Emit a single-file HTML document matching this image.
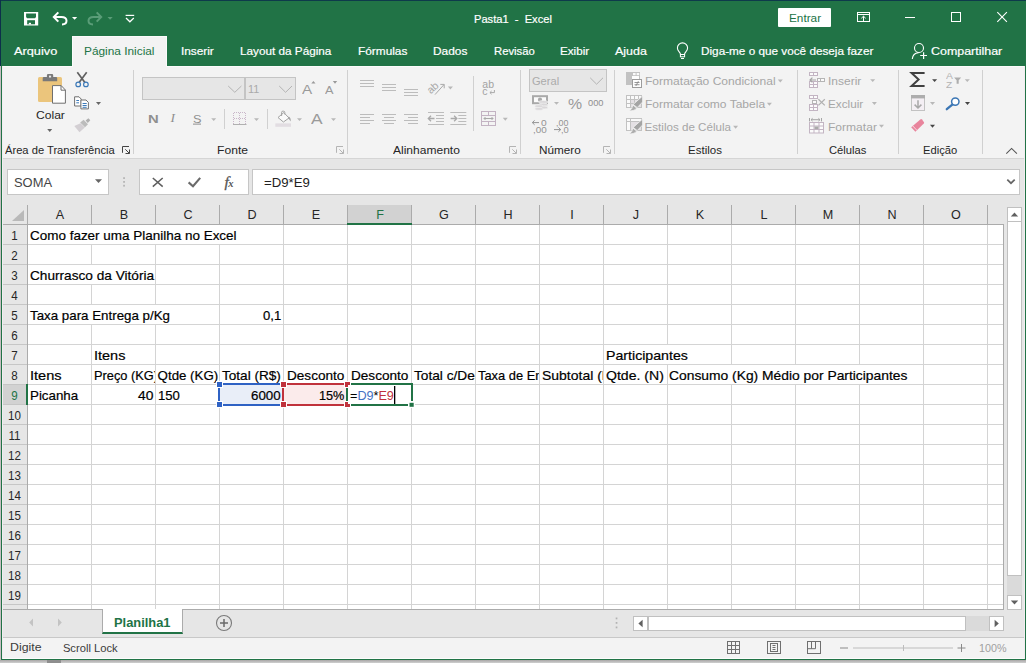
<!DOCTYPE html>
<html lang="pt-BR"><head><meta charset="utf-8"><title>Pasta1 - Excel</title><style>
html,body{margin:0;padding:0;}
body{width:1026px;height:663px;overflow:hidden;background:#217346;font-family:"Liberation Sans",sans-serif;position:relative;}
.b{position:absolute;display:block;box-sizing:border-box;}
.t{position:absolute;white-space:pre;line-height:20px;height:20px;transform-origin:0 0;display:block;}
.c{position:absolute;overflow:hidden;display:block;}
</style></head>
<body>
<div class="b" style="left:0px;top:0px;width:1026px;height:663px;background:#217346;"></div><div class="b" style="left:0px;top:0px;width:1026px;height:1px;background:#0e3a4b;"></div><div class="b" style="left:0px;top:0px;width:1px;height:66px;background:#0c2f4a;"></div><div class="b" style="left:0px;top:66px;width:1px;height:597px;background:#c6bec2;"></div><div class="b" style="left:0px;top:660px;width:1026px;height:3px;background:linear-gradient(#a9a7a7,#cfcfcf);"></div><div class="b" style="left:47px;top:660px;width:14px;height:3px;background:#8e8e8e;"></div><div class="b" style="left:1px;top:1px;width:1025px;height:65px;background:#217346;"></div><div class="b" style="left:72px;top:36px;width:95px;height:31px;background:#f3f3f3;border:1px solid #fbfbfb;border-bottom:none;"></div><div class="b" style="left:2px;top:66px;width:1023px;height:92px;background:#f3f3f3;"></div><div class="b" style="left:2px;top:66px;width:71px;height:1px;background:#fbfbfb;"></div><div class="b" style="left:166px;top:66px;width:859px;height:1px;background:#fbfbfb;"></div><div class="b" style="left:2px;top:158px;width:1023px;height:1px;background:#d5d5d5;"></div><div class="b" style="left:2px;top:159px;width:1023px;height:46px;background:#e6e6e6;"></div><div class="b" style="left:7px;top:169px;width:102px;height:26px;background:#fff;border:1px solid #c6c6c6;"></div><div class="b" style="left:139px;top:169px;width:110px;height:26px;background:#fff;border:1px solid #c6c6c6;"></div><div class="b" style="left:252px;top:169px;width:768px;height:26px;background:#fff;border:1px solid #c6c6c6;"></div><div class="b" style="left:2px;top:205px;width:1023px;height:405px;background:#e6e6e6;"></div><div class="b" style="left:28px;top:225px;width:975px;height:384px;background:#fff;"></div><div class="b" style="left:348px;top:205px;width:63px;height:19px;background:#d2d2d2;"></div><div class="b" style="left:2px;top:385px;width:25px;height:19px;background:#d2d2d2;"></div><svg class="b" style="left:0px;top:0px;" width="1026" height="663" viewBox="0 0 1026 663"><rect x="91" y="225" width="1" height="384" fill="#d4d4d4"/><rect x="91" y="205" width="1" height="19" fill="#ababab"/><rect x="155" y="225" width="1" height="384" fill="#d4d4d4"/><rect x="155" y="205" width="1" height="19" fill="#ababab"/><rect x="219" y="225" width="1" height="384" fill="#d4d4d4"/><rect x="219" y="205" width="1" height="19" fill="#ababab"/><rect x="283" y="225" width="1" height="384" fill="#d4d4d4"/><rect x="283" y="205" width="1" height="19" fill="#ababab"/><rect x="347" y="225" width="1" height="384" fill="#d4d4d4"/><rect x="347" y="205" width="1" height="19" fill="#ababab"/><rect x="411" y="225" width="1" height="384" fill="#d4d4d4"/><rect x="411" y="205" width="1" height="19" fill="#ababab"/><rect x="475" y="225" width="1" height="384" fill="#d4d4d4"/><rect x="475" y="205" width="1" height="19" fill="#ababab"/><rect x="539" y="225" width="1" height="384" fill="#d4d4d4"/><rect x="539" y="205" width="1" height="19" fill="#ababab"/><rect x="603" y="225" width="1" height="384" fill="#d4d4d4"/><rect x="603" y="205" width="1" height="19" fill="#ababab"/><rect x="667" y="225" width="1" height="384" fill="#d4d4d4"/><rect x="667" y="205" width="1" height="19" fill="#ababab"/><rect x="731" y="225" width="1" height="384" fill="#d4d4d4"/><rect x="731" y="205" width="1" height="19" fill="#ababab"/><rect x="795" y="225" width="1" height="384" fill="#d4d4d4"/><rect x="795" y="205" width="1" height="19" fill="#ababab"/><rect x="859" y="225" width="1" height="384" fill="#d4d4d4"/><rect x="859" y="205" width="1" height="19" fill="#ababab"/><rect x="923" y="225" width="1" height="384" fill="#d4d4d4"/><rect x="923" y="205" width="1" height="19" fill="#ababab"/><rect x="987" y="225" width="1" height="384" fill="#d4d4d4"/><rect x="987" y="205" width="1" height="19" fill="#ababab"/><rect x="28" y="244" width="975" height="1" fill="#d4d4d4"/><rect x="2" y="244" width="25" height="1" fill="#c6c6c6"/><rect x="28" y="264" width="975" height="1" fill="#d4d4d4"/><rect x="2" y="264" width="25" height="1" fill="#c6c6c6"/><rect x="28" y="284" width="975" height="1" fill="#d4d4d4"/><rect x="2" y="284" width="25" height="1" fill="#c6c6c6"/><rect x="28" y="304" width="975" height="1" fill="#d4d4d4"/><rect x="2" y="304" width="25" height="1" fill="#c6c6c6"/><rect x="28" y="324" width="975" height="1" fill="#d4d4d4"/><rect x="2" y="324" width="25" height="1" fill="#c6c6c6"/><rect x="28" y="344" width="975" height="1" fill="#d4d4d4"/><rect x="2" y="344" width="25" height="1" fill="#c6c6c6"/><rect x="28" y="364" width="975" height="1" fill="#d4d4d4"/><rect x="2" y="364" width="25" height="1" fill="#c6c6c6"/><rect x="28" y="384" width="975" height="1" fill="#d4d4d4"/><rect x="2" y="384" width="25" height="1" fill="#c6c6c6"/><rect x="28" y="404" width="975" height="1" fill="#d4d4d4"/><rect x="2" y="404" width="25" height="1" fill="#c6c6c6"/><rect x="28" y="424" width="975" height="1" fill="#d4d4d4"/><rect x="2" y="424" width="25" height="1" fill="#c6c6c6"/><rect x="28" y="444" width="975" height="1" fill="#d4d4d4"/><rect x="2" y="444" width="25" height="1" fill="#c6c6c6"/><rect x="28" y="464" width="975" height="1" fill="#d4d4d4"/><rect x="2" y="464" width="25" height="1" fill="#c6c6c6"/><rect x="28" y="484" width="975" height="1" fill="#d4d4d4"/><rect x="2" y="484" width="25" height="1" fill="#c6c6c6"/><rect x="28" y="504" width="975" height="1" fill="#d4d4d4"/><rect x="2" y="504" width="25" height="1" fill="#c6c6c6"/><rect x="28" y="524" width="975" height="1" fill="#d4d4d4"/><rect x="2" y="524" width="25" height="1" fill="#c6c6c6"/><rect x="28" y="544" width="975" height="1" fill="#d4d4d4"/><rect x="2" y="544" width="25" height="1" fill="#c6c6c6"/><rect x="28" y="564" width="975" height="1" fill="#d4d4d4"/><rect x="2" y="564" width="25" height="1" fill="#c6c6c6"/><rect x="28" y="584" width="975" height="1" fill="#d4d4d4"/><rect x="2" y="584" width="25" height="1" fill="#c6c6c6"/><rect x="28" y="604" width="975" height="1" fill="#d4d4d4"/><rect x="2" y="604" width="25" height="1" fill="#c6c6c6"/><rect x="27" y="205" width="1" height="404" fill="#ababab"/><rect x="2" y="224" width="1001" height="1" fill="#ababab"/><rect x="1003" y="224" width="1" height="386" fill="#ababab"/><rect x="2" y="609" width="1002" height="1" fill="#ababab"/><rect x="347" y="223" width="65" height="2" fill="#217346"/><rect x="26" y="384" width="2" height="21" fill="#217346"/><path d="M24 210 L24 221 L12 221 Z" fill="#b9b9b9"/></svg><div class="b" style="left:91px;top:225px;width:1px;height:19px;background:#fff;"></div><div class="b" style="left:155px;top:225px;width:1px;height:19px;background:#fff;"></div><div class="b" style="left:219px;top:225px;width:1px;height:19px;background:#fff;"></div><div class="b" style="left:91px;top:265px;width:1px;height:19px;background:#fff;"></div><div class="b" style="left:91px;top:305px;width:1px;height:19px;background:#fff;"></div><div class="b" style="left:155px;top:305px;width:1px;height:19px;background:#fff;"></div><div class="b" style="left:667px;top:345px;width:1px;height:19px;background:#fff;"></div><div class="b" style="left:731px;top:365px;width:1px;height:19px;background:#fff;"></div><div class="b" style="left:795px;top:365px;width:1px;height:19px;background:#fff;"></div><div class="b" style="left:859px;top:365px;width:1px;height:19px;background:#fff;"></div><div class="b" style="left:220px;top:385px;width:62px;height:19px;background:#e9eef8;"></div><div class="b" style="left:284px;top:385px;width:62px;height:19px;background:#fbebeb;"></div><div class="b" style="left:2px;top:610px;width:1023px;height:28px;background:#e6e6e6;"></div><div class="b" style="left:102px;top:609px;width:81px;height:25px;background:#fff;border-left:1px solid #ababab;border-right:1px solid #ababab;border-bottom:2px solid #217346;"></div><div class="b" style="left:2px;top:637px;width:1023px;height:1px;background:#c8c8c8;"></div><div class="b" style="left:2px;top:638px;width:1023px;height:21px;background:#f3f3f3;"></div><div class="b" style="left:2px;top:658px;width:1023px;height:1px;background:#fdfdfd;"></div><div class="b" style="left:1024px;top:66px;width:1px;height:593px;background:#f2edf0;"></div><div class="b" style="left:2px;top:66px;width:1px;height:593px;background:#f2edf0;"></div><span class="t" style="left:473.50px;top:8.98px;font-size:11.6px;color:#fff;-webkit-text-stroke:0.2px;transform:scaleX(0.9593);">Pasta1  -  Excel</span><div class="b" style="left:778px;top:8px;width:53px;height:19px;background:#fff;border-radius:1px;"></div><span class="t" style="left:788.60px;top:7.98px;font-size:11.6px;color:#217346;transform:scaleX(1.0165);">Entrar</span><span class="t" style="left:14.30px;top:40.98px;font-size:11.6px;color:#fff;-webkit-text-stroke:0.2px;transform:scaleX(1.1014);">Arquivo</span><span class="t" style="left:83.60px;top:40.98px;font-size:11.6px;color:#217346;transform:scaleX(1.0222);">Página Inicial</span><span class="t" style="left:180.70px;top:40.98px;font-size:11.6px;color:#fff;-webkit-text-stroke:0.2px;transform:scaleX(1.0180);">Inserir</span><span class="t" style="left:239.80px;top:40.98px;font-size:11.6px;color:#fff;-webkit-text-stroke:0.2px;transform:scaleX(1.0127);">Layout da Página</span><span class="t" style="left:357.80px;top:40.98px;font-size:11.6px;color:#fff;-webkit-text-stroke:0.2px;transform:scaleX(1.0222);">Fórmulas</span><span class="t" style="left:433.30px;top:40.98px;font-size:11.6px;color:#fff;-webkit-text-stroke:0.2px;transform:scaleX(1.0264);">Dados</span><span class="t" style="left:493.80px;top:40.98px;font-size:11.6px;color:#fff;-webkit-text-stroke:0.2px;transform:scaleX(0.9716);">Revisão</span><span class="t" style="left:560.40px;top:40.98px;font-size:11.6px;color:#fff;-webkit-text-stroke:0.2px;transform:scaleX(1.0034);">Exibir</span><span class="t" style="left:615.40px;top:40.98px;font-size:11.6px;color:#fff;-webkit-text-stroke:0.2px;transform:scaleX(1.0723);">Ajuda</span><span class="t" style="left:701.30px;top:40.98px;font-size:11.6px;color:#fff;-webkit-text-stroke:0.2px;transform:scaleX(1.0133);">Diga-me o que você deseja fazer</span><span class="t" style="left:930.50px;top:40.98px;font-size:11.6px;color:#fff;-webkit-text-stroke:0.2px;transform:scaleX(1.0727);">Compartilhar</span><span class="t" style="left:35.80px;top:104.98px;font-size:11.6px;color:#262626;transform:scaleX(1.0426);">Colar</span><span class="t" style="left:4.60px;top:139.98px;font-size:11.6px;color:#262626;transform:scaleX(0.9625);">Área de Transferência</span><span class="t" style="left:216.60px;top:139.98px;font-size:11.6px;color:#262626;transform:scaleX(1.0453);">Fonte</span><span class="t" style="left:392.50px;top:139.98px;font-size:11.6px;color:#262626;transform:scaleX(1.0380);">Alinhamento</span><span class="t" style="left:538.50px;top:139.98px;font-size:11.6px;color:#262626;transform:scaleX(1.0133);">Número</span><span class="t" style="left:688.40px;top:139.98px;font-size:11.6px;color:#262626;transform:scaleX(0.9925);">Estilos</span><span class="t" style="left:829.20px;top:139.98px;font-size:11.6px;color:#262626;transform:scaleX(0.9645);">Células</span><span class="t" style="left:922.80px;top:139.98px;font-size:11.6px;color:#262626;transform:scaleX(0.9647);">Edição</span><span class="t" style="left:644.60px;top:71.18px;font-size:11.6px;color:#a6a6a6;transform:scaleX(1.0392);">Formatação Condicional</span><span class="t" style="left:644.60px;top:94.38px;font-size:11.6px;color:#a6a6a6;transform:scaleX(1.0373);">Formatar como Tabela</span><span class="t" style="left:644.60px;top:117.28px;font-size:11.6px;color:#a6a6a6;">Estilos de Célula</span><span class="t" style="left:827.50px;top:71.18px;font-size:11.6px;color:#a6a6a6;transform:scaleX(1.0336);">Inserir</span><span class="t" style="left:827.50px;top:94.38px;font-size:11.6px;color:#a6a6a6;transform:scaleX(1.0145);">Excluir</span><span class="t" style="left:827.50px;top:117.28px;font-size:11.6px;color:#a6a6a6;transform:scaleX(1.0397);">Formatar</span><span class="t" style="left:13.50px;top:172.67px;font-size:12.5px;color:#444;transform:scaleX(1.0323);">SOMA</span><span class="t" style="left:263.70px;top:172.67px;font-size:12.5px;color:#222;transform:scaleX(1.0544);">=D9*E9</span><span class="t" style="left:40px;top:205.33px;width:40px;text-align:center;font-size:12.6px;color:#262626;">A</span><span class="t" style="left:104px;top:205.33px;width:40px;text-align:center;font-size:12.6px;color:#262626;">B</span><span class="t" style="left:168px;top:205.33px;width:40px;text-align:center;font-size:12.6px;color:#262626;">C</span><span class="t" style="left:232px;top:205.33px;width:40px;text-align:center;font-size:12.6px;color:#262626;">D</span><span class="t" style="left:296px;top:205.33px;width:40px;text-align:center;font-size:12.6px;color:#262626;">E</span><span class="t" style="left:360px;top:205.33px;width:40px;text-align:center;font-size:12.6px;color:#217346;">F</span><span class="t" style="left:424px;top:205.33px;width:40px;text-align:center;font-size:12.6px;color:#262626;">G</span><span class="t" style="left:488px;top:205.33px;width:40px;text-align:center;font-size:12.6px;color:#262626;">H</span><span class="t" style="left:552px;top:205.33px;width:40px;text-align:center;font-size:12.6px;color:#262626;">I</span><span class="t" style="left:616px;top:205.33px;width:40px;text-align:center;font-size:12.6px;color:#262626;">J</span><span class="t" style="left:680px;top:205.33px;width:40px;text-align:center;font-size:12.6px;color:#262626;">K</span><span class="t" style="left:744px;top:205.33px;width:40px;text-align:center;font-size:12.6px;color:#262626;">L</span><span class="t" style="left:808px;top:205.33px;width:40px;text-align:center;font-size:12.6px;color:#262626;">M</span><span class="t" style="left:872px;top:205.33px;width:40px;text-align:center;font-size:12.6px;color:#262626;">N</span><span class="t" style="left:936px;top:205.33px;width:40px;text-align:center;font-size:12.6px;color:#262626;">O</span><span class="t" style="left:0px;top:226.13px;width:29px;text-align:center;font-size:12.6px;color:#262626;transform:scaleX(0.92);transform-origin:14.5px 0;">1</span><span class="t" style="left:0px;top:246.13px;width:29px;text-align:center;font-size:12.6px;color:#262626;transform:scaleX(0.92);transform-origin:14.5px 0;">2</span><span class="t" style="left:0px;top:266.13px;width:29px;text-align:center;font-size:12.6px;color:#262626;transform:scaleX(0.92);transform-origin:14.5px 0;">3</span><span class="t" style="left:0px;top:286.13px;width:29px;text-align:center;font-size:12.6px;color:#262626;transform:scaleX(0.92);transform-origin:14.5px 0;">4</span><span class="t" style="left:0px;top:306.13px;width:29px;text-align:center;font-size:12.6px;color:#262626;transform:scaleX(0.92);transform-origin:14.5px 0;">5</span><span class="t" style="left:0px;top:326.13px;width:29px;text-align:center;font-size:12.6px;color:#262626;transform:scaleX(0.92);transform-origin:14.5px 0;">6</span><span class="t" style="left:0px;top:346.13px;width:29px;text-align:center;font-size:12.6px;color:#262626;transform:scaleX(0.92);transform-origin:14.5px 0;">7</span><span class="t" style="left:0px;top:366.13px;width:29px;text-align:center;font-size:12.6px;color:#262626;transform:scaleX(0.92);transform-origin:14.5px 0;">8</span><span class="t" style="left:0px;top:386.13px;width:29px;text-align:center;font-size:12.6px;color:#217346;transform:scaleX(0.92);transform-origin:14.5px 0;">9</span><span class="t" style="left:0px;top:406.13px;width:29px;text-align:center;font-size:12.6px;color:#262626;transform:scaleX(0.92);transform-origin:14.5px 0;">10</span><span class="t" style="left:0px;top:426.13px;width:29px;text-align:center;font-size:12.6px;color:#262626;transform:scaleX(0.92);transform-origin:14.5px 0;">11</span><span class="t" style="left:0px;top:446.13px;width:29px;text-align:center;font-size:12.6px;color:#262626;transform:scaleX(0.92);transform-origin:14.5px 0;">12</span><span class="t" style="left:0px;top:466.13px;width:29px;text-align:center;font-size:12.6px;color:#262626;transform:scaleX(0.92);transform-origin:14.5px 0;">13</span><span class="t" style="left:0px;top:486.13px;width:29px;text-align:center;font-size:12.6px;color:#262626;transform:scaleX(0.92);transform-origin:14.5px 0;">14</span><span class="t" style="left:0px;top:506.13px;width:29px;text-align:center;font-size:12.6px;color:#262626;transform:scaleX(0.92);transform-origin:14.5px 0;">15</span><span class="t" style="left:0px;top:526.13px;width:29px;text-align:center;font-size:12.6px;color:#262626;transform:scaleX(0.92);transform-origin:14.5px 0;">16</span><span class="t" style="left:0px;top:546.13px;width:29px;text-align:center;font-size:12.6px;color:#262626;transform:scaleX(0.92);transform-origin:14.5px 0;">17</span><span class="t" style="left:0px;top:566.13px;width:29px;text-align:center;font-size:12.6px;color:#262626;transform:scaleX(0.92);transform-origin:14.5px 0;">18</span><span class="t" style="left:0px;top:586.13px;width:29px;text-align:center;font-size:12.6px;color:#262626;transform:scaleX(0.92);transform-origin:14.5px 0;">19</span><span class="t" style="left:30.10px;top:225.89px;font-size:13.3px;color:#000;-webkit-text-stroke:0.2px;transform:scaleX(1.0127);">Como fazer uma Planilha no Excel</span><span class="t" style="left:30.10px;top:265.89px;font-size:13.3px;color:#000;-webkit-text-stroke:0.2px;transform:scaleX(1.0259);">Churrasco da Vitória</span><span class="t" style="left:30.10px;top:305.89px;font-size:13.3px;color:#000;-webkit-text-stroke:0.2px;transform:scaleX(1.0020);">Taxa para Entrega p/Kg</span><span class="t" style="left:262.50px;top:305.89px;font-size:13.3px;color:#000;-webkit-text-stroke:0.2px;transform:scaleX(0.9838);">0,1</span><span class="t" style="left:94.00px;top:345.89px;font-size:13.3px;color:#000;-webkit-text-stroke:0.2px;transform:scaleX(1.0892);">Itens</span><span class="t" style="left:605.80px;top:345.89px;font-size:13.3px;color:#000;-webkit-text-stroke:0.2px;transform:scaleX(1.0654);">Participantes</span><span class="t" style="left:30.00px;top:365.89px;font-size:13.3px;color:#000;-webkit-text-stroke:0.2px;transform:scaleX(1.0962);">Itens</span><span class="c" style="left:92px;top:365.89px;width:63px;height:20px;"><span class="t" style="left:2.10px;top:0;font-size:13.3px;color:#000;-webkit-text-stroke:0.2px;transform:scaleX(0.9633);">Preço (KG)</span></span><span class="t" style="left:157.60px;top:365.89px;font-size:13.3px;color:#000;-webkit-text-stroke:0.2px;">Qtde (KG)</span><span class="t" style="left:221.80px;top:365.89px;font-size:13.3px;color:#000;-webkit-text-stroke:0.2px;transform:scaleX(1.0218);">Total (R$)</span><span class="t" style="left:286.50px;top:365.89px;font-size:13.3px;color:#000;-webkit-text-stroke:0.2px;transform:scaleX(1.0216);">Desconto</span><span class="t" style="left:350.50px;top:365.89px;font-size:13.3px;color:#000;-webkit-text-stroke:0.2px;transform:scaleX(1.0216);">Desconto</span><span class="c" style="left:412px;top:365.89px;width:63px;height:20px;"><span class="t" style="left:1.70px;top:0;font-size:13.3px;color:#000;-webkit-text-stroke:0.2px;transform:scaleX(1.0283);">Total c/Desconto</span></span><span class="c" style="left:476px;top:365.89px;width:63px;height:20px;"><span class="t" style="left:2.20px;top:0;font-size:13.3px;color:#000;-webkit-text-stroke:0.2px;transform:scaleX(0.9689);">Taxa de Entrega</span></span><span class="c" style="left:540px;top:365.89px;width:63px;height:20px;"><span class="t" style="left:1.60px;top:0;font-size:13.3px;color:#000;-webkit-text-stroke:0.2px;transform:scaleX(1.0506);">Subtotal (R$)</span></span><span class="t" style="left:605.80px;top:365.89px;font-size:13.3px;color:#000;-webkit-text-stroke:0.2px;transform:scaleX(1.0587);">Qtde. (N)</span><span class="t" style="left:669.30px;top:365.89px;font-size:13.3px;color:#000;-webkit-text-stroke:0.2px;transform:scaleX(1.0406);">Consumo (Kg) Médio por Participantes</span><span class="t" style="left:30.00px;top:385.89px;font-size:13.3px;color:#000;-webkit-text-stroke:0.2px;transform:scaleX(1.0029);">Picanha</span><span class="t" style="left:137.80px;top:385.89px;font-size:13.3px;color:#000;-webkit-text-stroke:0.2px;transform:scaleX(1.0408);">40</span><span class="t" style="left:157.80px;top:385.89px;font-size:13.3px;color:#000;-webkit-text-stroke:0.2px;transform:scaleX(0.9870);">150</span><span class="t" style="left:251.30px;top:385.89px;font-size:13.3px;color:#000;-webkit-text-stroke:0.2px;transform:scaleX(1.0036);">6000</span><span class="t" style="left:319.30px;top:385.89px;font-size:13.3px;color:#000;-webkit-text-stroke:0.2px;transform:scaleX(0.9540);">15%</span><span class="t" style="left:114.00px;top:612.83px;font-size:12.6px;color:#217346;font-weight:700;transform:scaleX(1.0218);">Planilha1</span><span class="t" style="left:9.70px;top:637.32px;font-size:11.2px;color:#3b3b3b;transform:scaleX(1.1010);">Digite</span><span class="t" style="left:62.90px;top:638.02px;font-size:11.2px;color:#3b3b3b;">Scroll Lock</span><span class="t" style="left:978.90px;top:637.72px;font-size:11.2px;color:#a0a0a0;transform:scaleX(0.9607);">100%</span><svg class="b" style="left:0px;top:0px;" width="1026" height="663" viewBox="0 0 1026 663"><rect x="218" y="383" width="66" height="2" fill="#2f62c4"/><rect x="218" y="404" width="66" height="2" fill="#2f62c4"/><rect x="218" y="383" width="2" height="23" fill="#2f62c4"/><rect x="282" y="383" width="66" height="2" fill="#c0323c"/><rect x="282" y="404" width="66" height="2" fill="#c0323c"/><rect x="282" y="383" width="2" height="23" fill="#c0323c"/><rect x="346" y="383" width="2" height="23" fill="#c0323c"/><rect x="346" y="383" width="67" height="2" fill="#217346"/><rect x="346" y="404" width="67" height="2" fill="#217346"/><rect x="346" y="383" width="2" height="23" fill="#217346"/><rect x="411" y="383" width="2" height="23" fill="#217346"/><rect x="216" y="381" width="7" height="7" fill="#fff"/><rect x="217" y="382" width="5" height="5" fill="#2f62c4"/><rect x="216" y="401" width="7" height="7" fill="#fff"/><rect x="217" y="402" width="5" height="5" fill="#2f62c4"/><rect x="280" y="381" width="7" height="7" fill="#fff"/><rect x="281" y="382" width="5" height="5" fill="#c0323c"/><rect x="280" y="401" width="7" height="7" fill="#fff"/><rect x="281" y="402" width="5" height="5" fill="#c0323c"/><rect x="344" y="381" width="7" height="7" fill="#fff"/><rect x="345" y="382" width="5" height="5" fill="#c0323c"/><rect x="344" y="401" width="7" height="7" fill="#fff"/><rect x="345" y="402" width="5" height="5" fill="#c0323c"/><rect x="348" y="385" width="63" height="19" fill="#fff"/><rect x="408" y="401" width="7" height="7" fill="#fff"/><rect x="409.5" y="402.8" width="4.2" height="4" fill="#217346"/><rect x="394" y="386" width="1.3" height="18" fill="#000"/></svg><span class="t" style="left:349.80px;top:385.89px;font-size:13.3px;color:#000;transform:scaleX(0.9498);">=<span style="color:#4472c4">D9</span>*<span style="color:#c0323c">E9</span></span><svg class="b" style="left:0px;top:0px;" width="1026" height="66" viewBox="0 0 1026 66"><rect x="24" y="12" width="14.2" height="13.5" fill="#fff"/><path d="M26.1 13.5 H36 V17 L35 18.2 H27.1 L26.1 17 Z" fill="#217346"/><rect x="27.2" y="20.2" width="7.8" height="4.1" fill="#217346"/><rect x="28.8" y="22.8" width="2.2" height="1.6" fill="#fff"/><path d="M58.3 12.4 L53.8 17 L58.3 21.6" stroke="#fff" fill="none" stroke-width="2"/><path d="M54.2 17 H61.3 C64.6 17 66.5 18.7 66.5 20.8 C66.5 22.9 64.8 24.4 62 24.4" stroke="#fff" fill="none" stroke-width="2"/><path d="M72 17 H77.2 L74.6 19.8 Z" fill="#fff"/><path d="M96.7 12.4 L101.2 17 L96.7 21.6" stroke="#5a9d78" fill="none" stroke-width="2"/><path d="M100.8 17 H93.7 C90.4 17 88.5 18.7 88.5 20.8 C88.5 22.9 90.2 24.4 93 24.4" stroke="#5a9d78" fill="none" stroke-width="2"/><path d="M107.5 17 H112.7 L110.1 19.8 Z" fill="#5a9d78"/><rect x="125.6" y="14.8" width="8.6" height="1.2" fill="#fff"/><path d="M126 18 L129.9 21.8 L133.8 18" stroke="#fff" fill="none" stroke-width="1.2"/><rect x="857.5" y="12.5" width="12" height="9" stroke="#fff" fill="none" stroke-width="1"/><rect x="857" y="14" width="13" height="1" fill="#fff"/><path d="M863.5 21 V16.3 M861.3 18.3 L863.5 16.2 L865.7 18.3" stroke="#fff" fill="none" stroke-width="1"/><rect x="905" y="17" width="10" height="1" fill="#fff"/><rect x="951.5" y="12.5" width="9" height="9" stroke="#fff" fill="none" stroke-width="1"/><path d="M997.3 12.2 L1006.9 21.8 M1006.9 12.2 L997.3 21.8" stroke="#fff" fill="none" stroke-width="1.1"/><path d="M680.5 54.5 C680.5 52.3 677.4 51.3 677.4 48 A5.1 5.1 0 0 1 687.6 48 C687.6 51.3 684.5 52.3 684.5 54.5" stroke="#fff" fill="none" stroke-width="1.1"/><rect x="680.4" y="54.5" width="4.2" height="2.3" stroke="#fff" fill="none" stroke-width="1"/><rect x="681" y="58" width="3" height="1" fill="#fff"/><circle cx="919" cy="48" r="4.5" stroke="#fff" fill="none" stroke-width="1.1"/><path d="M912.3 59 C912.6 55.6 915 53 918.6 52.6" stroke="#fff" fill="none" stroke-width="1.1"/><path d="M920.2 55.5 H927 M923.6 52.2 V58.9" stroke="#fff" fill="none" stroke-width="1.2"/></svg><svg class="b" style="left:0px;top:158px;" width="1026" height="47" viewBox="0 158 1026 47"><path d="M95 179.3 H102 L98.5 183 Z" fill="#666"/><rect x="123.2" y="177.2" width="1.7" height="1.8" fill="#b3b3b3"/><rect x="123.2" y="181" width="1.7" height="1.8" fill="#b3b3b3"/><rect x="123.2" y="184.8" width="1.7" height="1.8" fill="#b3b3b3"/><path d="M152.8 178 L162.7 186.6 M162.7 178 L152.8 186.6" stroke="#5e5e5e" stroke-width="1.5" fill="none"/><path d="M188.6 182.4 L193 186.3 L200.2 177.9" stroke="#6a6a6a" stroke-width="2.1" fill="none"/><path d="M1007.3 179.6 L1011 183.2 L1014.7 179.6" stroke="#666" stroke-width="1.7" fill="none"/></svg><span class="t" style="left:224.5px;top:171.5px;font-family:'Liberation Serif',serif;font-style:italic;font-size:15.5px;color:#555;-webkit-text-stroke:0.3px #555;">f<span style="font-size:10.5px;margin-left:-0.5px;font-weight:bold;-webkit-text-stroke:0;">x</span></span><div class="b" style="left:142px;top:77px;width:103px;height:23px;background:#e6e6e6;border:1px solid #c4c4c4;"></div><div class="b" style="left:245px;top:77px;width:51px;height:23px;background:#e6e6e6;border:1px solid #c4c4c4;"></div><span class="t" style="left:248.00px;top:78.98px;font-size:11.6px;color:#aaaaaa;transform:scaleX(0.9380);">11</span><span class="t" style="left:302.10px;top:79.67px;font-size:12.5px;color:#9a9a9a;transform:scaleX(1.2225);">A</span><span class="t" style="left:324.60px;top:80.36px;font-size:10.5px;color:#9a9a9a;transform:scaleX(1.2116);">A</span><span class="t" style="left:147.90px;top:109.28px;font-size:11.6px;color:#8f8f8f;font-weight:700;transform:scaleX(1.2776);">N</span><span class="t" style="left:170.6px;top:108.3px;font-family:'Liberation Serif',serif;font-style:italic;font-size:13.5px;color:#8f8f8f;">I</span><span class="t" style="left:192.60px;top:109.18px;font-size:11.6px;color:#8f8f8f;transform:scaleX(1.0990);">S</span><span class="t" style="left:311.30px;top:108.85px;font-size:14px;color:#9a9a9a;transform:scaleX(1.2415);">A</span><span class="t" style="left:425.6px;top:75.7px;font-size:10.5px;color:#a9a9a9;transform:rotate(-42deg);transform-origin:8px 10px;">ab</span><span class="t" style="left:482.3px;top:74.1px;font-size:10.5px;color:#a2a2a2;line-height:20px;">ab</span><span class="t" style="left:482.3px;top:81.2px;font-size:10.5px;color:#a2a2a2;line-height:20px;">c</span><div class="b" style="left:529px;top:69px;width:78px;height:23px;background:#e6e6e6;border:1px solid #c4c4c4;"></div><span class="t" style="left:532.10px;top:70.58px;font-size:11.6px;color:#ababab;transform:scaleX(0.9556);">Geral</span><span class="t" style="left:567.80px;top:93.98px;font-size:14.5px;color:#9a9a9a;transform:scaleX(1.0925);">%</span><span class="t" style="left:588.30px;top:92.58px;font-size:9px;color:#8f8f8f;transform:scaleX(1.0312);">000</span><span class="t" style="left:541.00px;top:112.65px;font-size:8.5px;color:#949494;transform:scaleX(1.2040);">0</span><span class="t" style="left:532.90px;top:119.95px;font-size:8.5px;color:#949494;transform:scaleX(1.1667);">,00</span><span class="t" style="left:556.30px;top:112.65px;font-size:8.5px;color:#949494;transform:scaleX(1.0483);">,00</span><span class="t" style="left:560.90px;top:119.95px;font-size:8.5px;color:#949494;transform:scaleX(1.0996);">,0</span><span class="t" style="left:945.50px;top:65.58px;font-size:9px;color:#b2b2b2;transform:scaleX(1.1470);">A</span><span class="t" style="left:945.90px;top:74.68px;font-size:9px;color:#b2b2b2;transform:scaleX(1.1273);">Z</span><svg class="b" style="left:0px;top:200px;" width="1026" height="463" viewBox="0 200 1026 463"><path d="M33 618.6 V626.4 L29.2 622.5 Z" fill="#c3c3c3"/><path d="M58 618.6 V626.4 L61.8 622.5 Z" fill="#c3c3c3"/><circle cx="224" cy="623" r="7.5" fill="none" stroke="#7a7a7a" stroke-width="1.1"/><path d="M220 623 H228 M224 619 V627" stroke="#6a6a6a" stroke-width="1.5" fill="none"/><rect x="615.7" y="617.5" width="1.7" height="1.8" fill="#b3b3b3"/><rect x="615.7" y="622" width="1.7" height="1.8" fill="#b3b3b3"/><rect x="615.7" y="626.5" width="1.7" height="1.8" fill="#b3b3b3"/><rect x="633.5" y="616.5" width="14" height="14" fill="#fff" stroke="#c0c0c0" stroke-width="1"/><path d="M642.6 619.8 V627.2 L638.4 623.5 Z" fill="#606060"/><rect x="648" y="616" width="341" height="15" fill="#dadada"/><rect x="648.5" y="616.5" width="317" height="14" fill="#fff" stroke="#c0c0c0" stroke-width="1"/><rect x="989.5" y="616.5" width="14" height="14" fill="#fff" stroke="#c0c0c0" stroke-width="1"/><path d="M994.6 619.8 V627.2 L998.8 623.5 Z" fill="#606060"/><rect x="1007" y="221" width="15" height="374" fill="#dadada"/><rect x="1007.5" y="207.5" width="14" height="14" fill="#fff" stroke="#c0c0c0" stroke-width="1"/><path d="M1010.8 216.6 H1018.2 L1014.5 212.6 Z" fill="#606060"/><rect x="1007.5" y="221.5" width="14" height="354" fill="#fff" stroke="#c0c0c0" stroke-width="1"/><rect x="1007.5" y="595.5" width="14" height="14" fill="#fff" stroke="#c0c0c0" stroke-width="1"/><path d="M1010.8 600.6 H1018.2 L1014.5 604.6 Z" fill="#606060"/><rect x="727.5" y="641.5" width="12" height="12" fill="none" stroke="#6f6f6f" stroke-width="1"/><path d="M731.5 641.5 V653.5 M735.5 641.5 V653.5 M727.5 645.5 H739.5 M727.5 649.5 H739.5" stroke="#6f6f6f" stroke-width="1" fill="none"/><rect x="767.5" y="641.5" width="13" height="12" fill="none" stroke="#6f6f6f" stroke-width="1"/><rect x="770.5" y="643.5" width="7" height="8" fill="none" stroke="#6f6f6f" stroke-width="1"/><path d="M772.5 645.5 H775.5 M772.5 647.5 H775.5 M772.5 649.5 H775.5" stroke="#6f6f6f" stroke-width="1" fill="none"/><rect x="807.5" y="641.5" width="13" height="12" fill="none" stroke="#6f6f6f" stroke-width="1"/><path d="M811.5 641.5 V648.7 M815.5 641.5 V648.7 M807.5 648.7 H815.5" stroke="#6f6f6f" stroke-width="1" fill="none"/><rect x="840" y="647.5" width="8" height="1" fill="#8a8a8a"/><rect x="853" y="647.5" width="100" height="1" fill="#bdbdbd"/><rect x="903" y="645" width="1" height="6" fill="#bdbdbd"/><path d="M957.5 648 H965.5 M961.5 644 V652" stroke="#8a8a8a" stroke-width="1" fill="none"/></svg><svg class="b" style="left:0px;top:66px;" width="1026" height="92" viewBox="0 66 1026 92"><rect x="133" y="70" width="1" height="84" fill="#d0d0d0"/><rect x="347" y="70" width="1" height="84" fill="#d0d0d0"/><rect x="520" y="70" width="1" height="84" fill="#d0d0d0"/><rect x="614" y="70" width="1" height="84" fill="#d0d0d0"/><rect x="797" y="70" width="1" height="84" fill="#d0d0d0"/><rect x="898" y="70" width="1" height="84" fill="#d0d0d0"/><rect x="982" y="70" width="1" height="84" fill="#d0d0d0"/><rect x="38" y="77" width="24" height="25" rx="1.6" fill="#ebc57c"/><path d="M42.7 81.2 V78.2 Q42.7 77 44 77 H46.9 V75.3 Q46.9 74.1 48.2 74.1 H52 Q53.2 74.1 53.2 75.3 V77 H56 Q57.2 77 57.2 78.2 V81.2 Z" fill="#797979"/><rect x="49" y="75.6" width="2.1" height="1.9" fill="#e9e9e9"/><path d="M52.5 85.6 H61.2 L65.4 90 V103.2 H52.5 Z" fill="#fff" stroke="#6f6f6f" stroke-width="1"/><path d="M61 85.8 V90.2 H65.3" fill="none" stroke="#6f6f6f" stroke-width="1"/><path d="M47.2 129.05 H52.2 L49.7 131.95 Z" fill="#666"/><path d="M77.3 72.3 L84.9 82.6 M86.7 72.3 L79.1 82.6" stroke="#606060" stroke-width="1.7" fill="none"/><circle cx="78.2" cy="84.4" r="2.3" fill="none" stroke="#3d7ab8" stroke-width="1.2"/><circle cx="85.9" cy="84.4" r="2.3" fill="none" stroke="#3d7ab8" stroke-width="1.2"/><path d="M74.6 96.8 H79 L81.2 99 V106 H74.6 Z" fill="#fff" stroke="#707070" stroke-width="1"/><path d="M76.3 100.5 H79 M76.3 102.8 H79" stroke="#3d7ab8" stroke-width="1"/><path d="M80.9 100 H86 L88.4 102.4 V108.9 H80.9 Z" fill="#fff" stroke="#707070" stroke-width="1"/><path d="M82.6 103.5 H86.7 M82.6 105.5 H86.7 M82.6 107.3 H86.7" stroke="#3d7ab8" stroke-width="1"/><path d="M96.0 102.05 H101.0 L98.5 104.95 Z" fill="#666"/><path d="M74.3 126 L80.5 123.2 L84.8 127.5 L79.5 132.3 Z" fill="#d3cfd3"/><path d="M80.2 122.6 L83.6 119.8 L88 124.2 L85 127.2 Z" fill="#bcbcbc"/><path d="M85.6 120.6 L88.4 118.3 L90.3 120.2 L87.8 122.9 Z" fill="#b0b0b0"/><path d="M122.5 152.8 V146.5 H129" stroke="#444" fill="none" stroke-width="1"/><path d="M125.3 149.3 L129.3 153.3 M129.5 149.5 V153.5 H125.5" stroke="#444" fill="none" stroke-width="1"/><path d="M228.2 86 L234.8 92.3 L241.4 86" stroke="#b4b4b4" stroke-width="1" fill="none"/><path d="M279.2 86 L285.6 92.3 L292 86" stroke="#b4b4b4" stroke-width="1" fill="none"/><path d="M311.3 83.6 L313.4 81 L315.5 83.6 Z" fill="#9a9a9a"/><path d="M332.8 81 H337.2 L335 83.7 Z" fill="#9a9a9a"/><rect x="193" y="123.6" width="8" height="1" fill="#8f8f8f"/><path d="M211.2 118.14999999999999 H216.2 L213.7 121.05 Z" fill="#b8b8b8"/><rect x="224" y="109" width="1" height="20" fill="#d0d0d0"/><path d="M233.5 112.5 H246 M233.5 118.5 H246 M233.5 112.5 V124 M239.5 112.5 V124 M245.5 112.5 V124" stroke="#c9b6c9" stroke-width="1" stroke-dasharray="1 1" fill="none" shape-rendering="crispEdges"/><rect x="233" y="124" width="13.5" height="1" fill="#b0b0b0"/><path d="M254.0 118.14999999999999 H259.0 L256.5 121.05 Z" fill="#b8b8b8"/><rect x="267" y="109" width="1" height="20" fill="#d0d0d0"/><path d="M278 117.5 L283.8 112.6 L289 118 L283.4 122 Z" fill="#fafafa" stroke="#a3a3a3" stroke-width="1"/><path d="M281.6 116 V112.4 Q281.6 111.2 282.8 111.2 H283.6 Q284.8 111.2 284.8 112.4 V114.5" fill="none" stroke="#a3a3a3" stroke-width="1"/><path d="M288.6 116.6 Q291.3 118 290.6 121.6 Q289.6 119.6 288.2 118.6 Z" fill="#a3a3a3"/><rect x="275.3" y="123.4" width="15.7" height="3.4" fill="#e2dde2"/><path d="M297.0 118.14999999999999 H302.0 L299.5 121.05 Z" fill="#b8b8b8"/><path d="M331.0 118.14999999999999 H336.0 L333.5 121.05 Z" fill="#b8b8b8"/><path d="M336.5 152.8 V146.5 H343" stroke="#b4b4b4" fill="none" stroke-width="1"/><path d="M339.3 149.3 L343.3 153.3 M343.5 149.5 V153.5 H339.5" stroke="#b4b4b4" fill="none" stroke-width="1"/><rect x="360" y="80.0" width="14" height="1" fill="#bcbcbc"/><rect x="382" y="84.0" width="14" height="1" fill="#bcbcbc"/><rect x="404" y="89.0" width="14" height="1" fill="#bcbcbc"/><rect x="360" y="83.0" width="14" height="1" fill="#bcbcbc"/><rect x="382" y="87.0" width="14" height="1" fill="#bcbcbc"/><rect x="404" y="92.0" width="14" height="1" fill="#bcbcbc"/><rect x="360" y="86.0" width="14" height="1" fill="#bcbcbc"/><rect x="382" y="90.0" width="14" height="1" fill="#bcbcbc"/><rect x="404" y="95.0" width="14" height="1" fill="#bcbcbc"/><rect x="360" y="114.0" width="14" height="1" fill="#bcbcbc"/><rect x="382.0" y="114.0" width="14" height="1" fill="#bcbcbc"/><rect x="404" y="114.0" width="14" height="1" fill="#bcbcbc"/><rect x="360" y="117.0" width="10" height="1" fill="#bcbcbc"/><rect x="384.0" y="117.0" width="10" height="1" fill="#bcbcbc"/><rect x="408" y="117.0" width="10" height="1" fill="#bcbcbc"/><rect x="360" y="120.0" width="14" height="1" fill="#bcbcbc"/><rect x="382.0" y="120.0" width="14" height="1" fill="#bcbcbc"/><rect x="404" y="120.0" width="14" height="1" fill="#bcbcbc"/><rect x="360" y="123.0" width="10" height="1" fill="#bcbcbc"/><rect x="384.0" y="123.0" width="10" height="1" fill="#bcbcbc"/><rect x="408" y="123.0" width="10" height="1" fill="#bcbcbc"/><path d="M435 94.6 L444 84.6 M440.3 84.4 H444.2 V88.3" stroke="#a9a9a9" stroke-width="1" fill="none"/><path d="M447.9 86.55 H452.9 L450.4 89.45 Z" fill="#b8b8b8"/><rect x="473" y="76" width="1" height="55" fill="#d0d0d0"/><path d="M494.4 90 V92.6 H490 M491.6 91 L489.9 92.6 L491.6 94.2" stroke="#a9a9a9" stroke-width="1" fill="none"/><rect x="428" y="112.0" width="16" height="1" fill="#bcbcbc"/><rect x="428" y="124.0" width="16" height="1" fill="#bcbcbc"/><rect x="436" y="115.0" width="8" height="1" fill="#bcbcbc"/><rect x="436" y="118.0" width="8" height="1" fill="#bcbcbc"/><rect x="436" y="121.0" width="8" height="1" fill="#bcbcbc"/><path d="M428.3 118.5 H434.5 M431 115.8 L428.3 118.5 L431 121.2" stroke="#a9a9a9" stroke-width="1.3" fill="none"/><rect x="450.3" y="112.0" width="16" height="1" fill="#bcbcbc"/><rect x="450.3" y="124.0" width="16" height="1" fill="#bcbcbc"/><rect x="458.3" y="115.0" width="8" height="1" fill="#bcbcbc"/><rect x="458.3" y="118.0" width="8" height="1" fill="#bcbcbc"/><rect x="458.3" y="121.0" width="8" height="1" fill="#bcbcbc"/><path d="M450.6 118.5 H456.8 M454.1 115.8 L456.8 118.5 L454.1 121.2" stroke="#a9a9a9" stroke-width="1.3" fill="none"/><rect x="481.5" y="111.5" width="14" height="14" fill="none" stroke="#c3b3c3" stroke-width="1"/><path d="M481.5 115.5 H495.5 M481.5 121.5 H495.5 M488.5 111.5 V115.5 M488.5 121.5 V125.5" stroke="#c3b3c3" stroke-width="1" fill="none"/><path d="M484 118.5 H493 M485.5 117 L484 118.5 L485.5 120 M491.5 117 L493 118.5 L491.5 120" stroke="#a9a9a9" stroke-width="1" fill="none"/><path d="M502.8 117.85 H507.8 L505.3 120.75 Z" fill="#b8b8b8"/><path d="M509.5 152.8 V146.5 H516" stroke="#b4b4b4" fill="none" stroke-width="1"/><path d="M512.3 149.3 L516.3 153.3 M516.5 149.5 V153.5 H512.5" stroke="#b4b4b4" fill="none" stroke-width="1"/><path d="M590.2 77.8 L596.6 84.2 L603 77.8" stroke="#b4b4b4" stroke-width="1" fill="none"/><rect x="533" y="96.2" width="14" height="7" fill="#fbfbfb" stroke="#a9a9a9" stroke-width="2"/><circle cx="540" cy="99.7" r="2.1" fill="#a9a9a9"/><ellipse cx="543.3" cy="102" rx="4.6" ry="1.5" fill="#d9d7d9" stroke="#f3f3f3" stroke-width=".6"/><ellipse cx="543.3" cy="104.7" rx="4.6" ry="1.5" fill="#d9d7d9" stroke="#f3f3f3" stroke-width=".6"/><ellipse cx="543.3" cy="107.4" rx="4.6" ry="1.5" fill="#d9d7d9" stroke="#f3f3f3" stroke-width=".6"/><ellipse cx="539" cy="106.2" rx="4.2" ry="1.4" fill="#d9d7d9" stroke="#f3f3f3" stroke-width=".6"/><ellipse cx="539" cy="108.9" rx="4.2" ry="1.4" fill="#d9d7d9" stroke="#f3f3f3" stroke-width=".6"/><path d="M554.0 101.95 H559.0 L556.5 104.85000000000001 Z" fill="#b8b8b8"/><path d="M532.3 122.6 H539 M534.6 120.4 L532.3 122.6 L534.6 124.8" stroke="#949494" stroke-width="1" fill="none"/><path d="M554 129.6 H560.7 M558.4 127.4 L560.7 129.6 L558.4 131.8" stroke="#949494" stroke-width="1" fill="none"/><path d="M603.5 152.8 V146.5 H610" stroke="#b4b4b4" fill="none" stroke-width="1"/><path d="M606.3 149.3 L610.3 153.3 M610.5 149.5 V153.5 H606.5" stroke="#b4b4b4" fill="none" stroke-width="1"/><rect x="626.5" y="72.5" width="13" height="12" fill="#fdfdfd" stroke="#c2c2c2" stroke-width="1"/><path d="M626 72 H632 V76 H640 M626 76 V85 H632 V76 Z" fill="#c2c2c2"/><rect x="626" y="72" width="5.5" height="13" fill="#c2c2c2"/><rect x="626" y="72" width="14" height="4" fill="#c2c2c2"/><rect x="633" y="73" width="2.6" height="2.2" fill="#fafafa"/><rect x="636.6" y="73" width="2.6" height="2.2" fill="#fafafa"/><rect x="632.5" y="79.5" width="9" height="8" fill="#fdfdfd" stroke="#9c9c9c" stroke-width="1"/><path d="M634.5 82.5 H639.5 M634.5 84.7 H639.5 M638.4 81.2 L635.8 86" stroke="#8a8a8a" stroke-width="0.9" fill="none"/><path d="M777.8 79.55 H782.8 L780.3 82.45 Z" fill="#b8b8b8"/><rect x="626.5" y="95.5" width="15" height="12" fill="#fafafa" stroke="#c2c2c2" stroke-width="1"/><rect x="631" y="100" width="10" height="7" fill="#e4e0e4"/><path d="M626.5 99.5 H641.5 M626.5 103.5 H641.5 M630.5 95.5 V107.5 M634.5 95.5 V107.5 M638.5 95.5 V107.5" stroke="#c2c2c2" stroke-width="1" fill="none"/><path d="M642.6 96 L642.6 102 L637.2 107.6 L633.2 104.4 Z" fill="#a4a4a4" stroke="#f3f3f3" stroke-width=".8"/><path d="M632.8 105 L636.8 108.2 Q635 111 629.2 111 Q632.4 109 632.8 105 Z" fill="#acacac" stroke="#f3f3f3" stroke-width=".8"/><path d="M766.9 102.75 H771.9 L769.4 105.65 Z" fill="#b8b8b8"/><rect x="626.5" y="118.5" width="15" height="12" fill="#fafafa" stroke="#c2c2c2" stroke-width="1"/><rect x="631" y="122" width="10" height="8" fill="#e4e0e4"/><path d="M626.5 121.5 H641.5 M630.5 118.5 V130.5" stroke="#c2c2c2" stroke-width="1" fill="none"/><path d="M642.6 119 L642.6 125 L637.2 130.6 L633.2 127.4 Z" fill="#a4a4a4" stroke="#f3f3f3" stroke-width=".8"/><path d="M632.8 128 L636.8 131.2 Q635 134 629.2 134 Q632.4 132 632.8 128 Z" fill="#acacac" stroke="#f3f3f3" stroke-width=".8"/><path d="M733.1 125.75 H738.1 L735.6 128.65 Z" fill="#b8b8b8"/><rect x="809.5" y="72.5" width="4" height="3" fill="#fbfbfb" stroke="#c3b5c3" stroke-width="1"/><rect x="813.5" y="72.5" width="4" height="3" fill="#fbfbfb" stroke="#c3b5c3" stroke-width="1"/><rect x="817.5" y="78.5" width="3" height="3" fill="#fbfbfb" stroke="#b5b5b5" stroke-width="1"/><rect x="820.5" y="78.5" width="4" height="3" fill="#fbfbfb" stroke="#b5b5b5" stroke-width="1"/><rect x="809.5" y="81.5" width="4" height="3" fill="#fbfbfb" stroke="#c3b5c3" stroke-width="1"/><rect x="813.5" y="81.5" width="4" height="3" fill="#fbfbfb" stroke="#c3b5c3" stroke-width="1"/><rect x="809.5" y="84.5" width="4" height="3" fill="#fbfbfb" stroke="#c3b5c3" stroke-width="1"/><rect x="813.5" y="84.5" width="4" height="3" fill="#fbfbfb" stroke="#c3b5c3" stroke-width="1"/><path d="M810 80 H816 M812.4 77.6 L810 80 L812.4 82.4" stroke="#a5a5a5" stroke-width="1.2" fill="none"/><path d="M870.2 79.14999999999999 H875.2 L872.7 82.05 Z" fill="#b8b8b8"/><rect x="809.5" y="95.5" width="4" height="3" fill="#fbfbfb" stroke="#c3b5c3" stroke-width="1"/><rect x="813.5" y="95.5" width="4" height="3" fill="#fbfbfb" stroke="#c3b5c3" stroke-width="1"/><rect x="812.5" y="100.5" width="4" height="3" fill="#fbfbfb" stroke="#b5b5b5" stroke-width="1"/><rect x="809.5" y="104.5" width="4" height="3" fill="#fbfbfb" stroke="#c3b5c3" stroke-width="1"/><rect x="813.5" y="104.5" width="4" height="3" fill="#fbfbfb" stroke="#c3b5c3" stroke-width="1"/><rect x="809.5" y="107.5" width="4" height="3" fill="#fbfbfb" stroke="#c3b5c3" stroke-width="1"/><rect x="813.5" y="107.5" width="4" height="3" fill="#fbfbfb" stroke="#c3b5c3" stroke-width="1"/><path d="M818.4 99.2 L824.8 105.4 M824.8 99.2 L818.4 105.4" stroke="#b0b0b0" stroke-width="1.2" fill="none"/><path d="M871.9 102.05 H876.9 L874.4 104.95 Z" fill="#b8b8b8"/><path d="M809.5 118 V121.4 M821.5 118 V121.4 M811 119.7 H820 M812.6 118.3 L811 119.7 L812.6 121.1 M818.4 118.3 L820 119.7 L818.4 121.1" stroke="#a5a5a5" stroke-width="1" fill="none"/><rect x="809.5" y="122.5" width="14" height="10.5" fill="#fbfbfb" stroke="#c3b5c3" stroke-width="1"/><path d="M809.5 126 H823.5 M809.5 129.5 H823.5 M814 122.5 V133 M819 122.5 V133" stroke="#c3b5c3" stroke-width="1" fill="none"/><rect x="814.5" y="126.5" width="4" height="2.6" fill="#a9a9a9"/><path d="M879.0 124.75 H884.0 L881.5 127.65 Z" fill="#b8b8b8"/><path d="M924.6 73 H911.6 L918.6 79.5 L911.6 86 H924.6" stroke="#404040" stroke-width="2" fill="none" stroke-linejoin="miter"/><path d="M932.1 79.14999999999999 H937.1 L934.6 82.05 Z" fill="#444"/><path d="M954.1 77.4 H961.2 L958.7 80.2 V83.8 H956.6 V80.2 Z" fill="#adadad"/><path d="M964.8 79.14999999999999 H969.8 L967.3 82.05 Z" fill="#b8b8b8"/><rect x="911.5" y="95.5" width="13" height="15" fill="#f4eff4" stroke="#c2c2c2" stroke-width="1"/><rect x="911" y="95" width="14" height="3.4" fill="#adadad"/><path d="M918 100.3 V108 M914.6 104.6 L918 108 L921.4 104.6" stroke="#a8a8a8" stroke-width="1.5" fill="none"/><path d="M930.0 102.05 H935.0 L932.5 104.95 Z" fill="#b8b8b8"/><path d="M952.6 104.4 L946.8 109.2" stroke="#3b76b4" stroke-width="2.3" fill="none" stroke-linecap="round"/><circle cx="955.3" cy="101.6" r="3.7" fill="#fff" stroke="#3b76b4" stroke-width="1.5"/><path d="M965.0 102.05 H970.0 L967.5 104.95 Z" fill="#444"/><path d="M911.2 127.2 L920.6 119.2 Q921.4 118.6 922 119.4 L924 122.3 Q924.4 123 923.8 123.6 L915.4 131.8 Z" fill="#e8849c"/><path d="M912.6 125.8 L917 130.4" stroke="#f7e3e8" stroke-width="0.9" fill="none"/><path d="M930.0 124.75 H935.0 L932.5 127.65 Z" fill="#444"/><path d="M1006.3 153.6 L1011.6 148.4 L1016.9 153.6" stroke="#555" stroke-width="1.1" fill="none"/></svg>
</body></html>
